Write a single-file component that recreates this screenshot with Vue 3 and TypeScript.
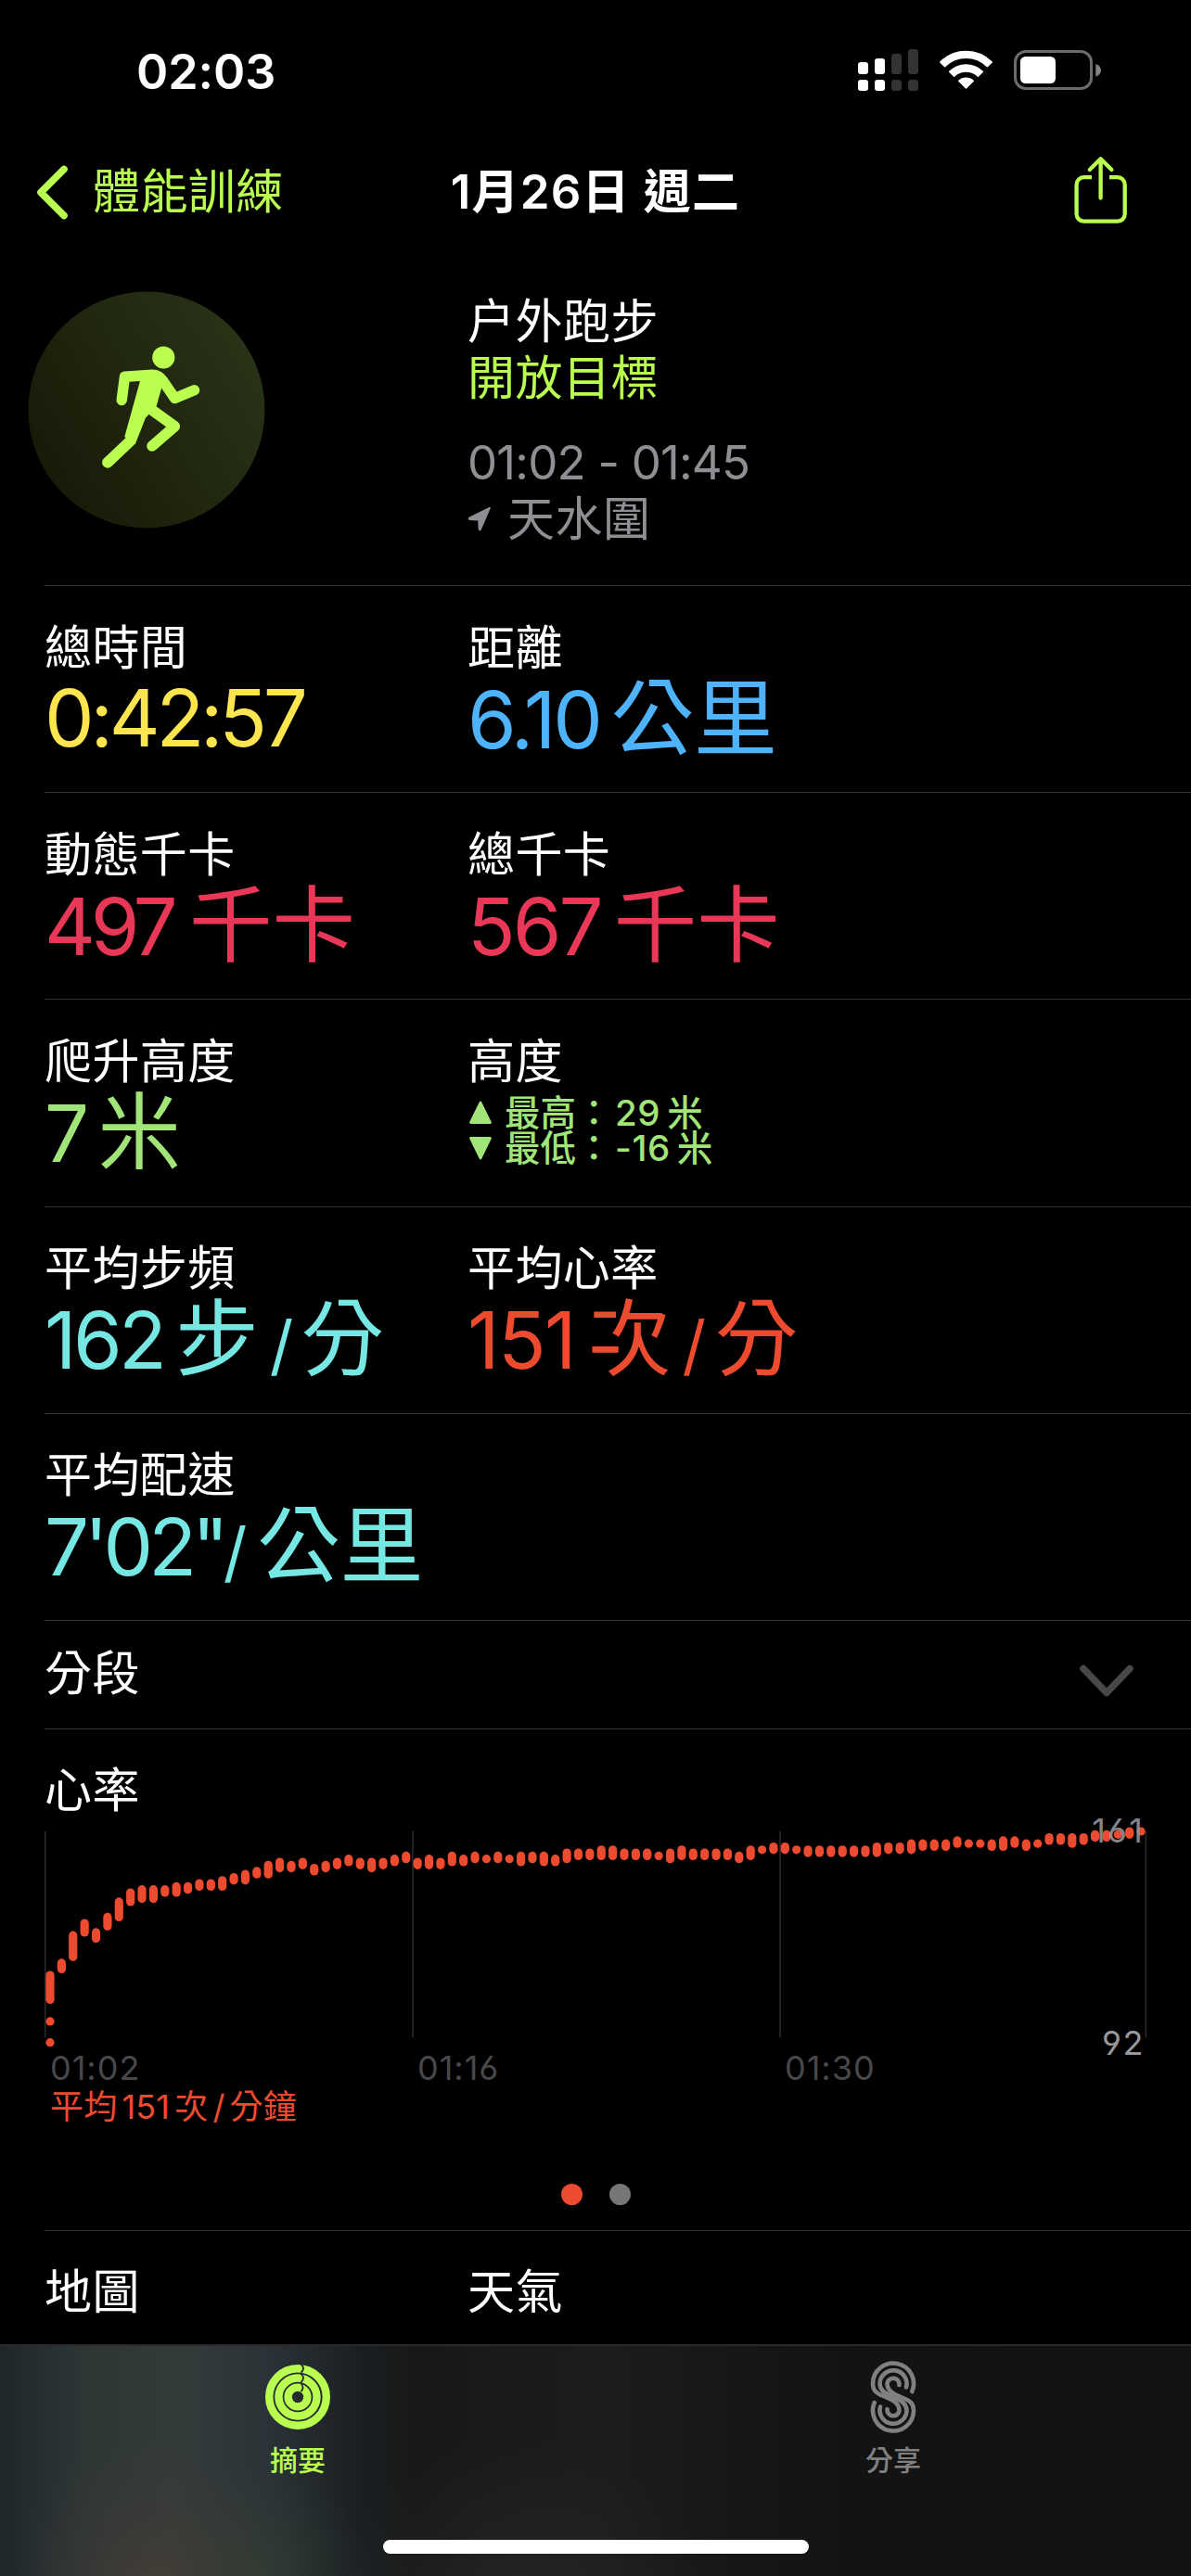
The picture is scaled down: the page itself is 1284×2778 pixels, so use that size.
<script setup lang="ts">
type PartKind = 'num' | 'unit' | 'slash'

interface Part {
  text: string
  kind: PartKind
  gap?: number
  tracking?: number
}

interface Metric {
  label: string
  tone: string
  parts: Part[]
}

const rows: Metric[][] = [
  [
    { label: '總時間', tone: 'yellow', parts: [{ text: '0:42:57', kind: 'num', tracking: -4.2 }] },
    {
      label: '距離',
      tone: 'blue',
      parts: [
        { text: '6.10', kind: 'num', tracking: -3.1 },
        { text: '公里', kind: 'unit', gap: 12 },
      ],
    },
  ],
  [
    {
      label: '動態千卡',
      tone: 'pink',
      parts: [
        { text: '497', kind: 'num', tracking: -5.2 },
        { text: '千卡', kind: 'unit', gap: 17.5 },
      ],
    },
    {
      label: '總千卡',
      tone: 'pink',
      parts: [
        { text: '567', kind: 'num', tracking: -2.9 },
        { text: '千卡', kind: 'unit', gap: 14 },
      ],
    },
  ],
  [
    {
      label: '爬升高度',
      tone: 'green',
      parts: [
        { text: '7', kind: 'num', tracking: -2 },
        { text: '米', kind: 'unit', gap: 11.5 },
      ],
    },
    { label: '高度', tone: 'green', parts: [] },
  ],
  [
    {
      label: '平均步頻',
      tone: 'cyan',
      parts: [
        { text: '162', kind: 'num', tracking: -3.6 },
        { text: '步', kind: 'unit', gap: 13 },
        { text: '/', kind: 'slash', gap: 12 },
        { text: '分', kind: 'unit', gap: 8 },
      ],
    },
    {
      label: '平均心率',
      tone: 'red',
      parts: [
        { text: '151', kind: 'num', tracking: -1.6 },
        { text: '次', kind: 'unit', gap: 14 },
        { text: '/', kind: 'slash', gap: 12 },
        { text: '分', kind: 'unit', gap: 9.5 },
      ],
    },
  ],
  [
    {
      label: '平均配速',
      tone: 'cyan',
      parts: [
        { text: '7\'02"', kind: 'num', tracking: -5 },
        { text: '/', kind: 'slash', gap: -1 },
        { text: '公里', kind: 'unit', gap: 11 },
      ],
    },
  ],
]

const partStyle = (part: Part) => ({
  marginLeft: `${part.gap ?? 0}px`,
  letterSpacing: `${part.tracking ?? 0}px`,
})

// Heart rate samples: [high, low] in beats per minute.
const samples: [number, number][] = [
  [114, 106], [118, 116], [127, 120], [131, 128], [128, 126], [133, 130], [138, 133], [141, 138],
  [142, 139], [142, 139], [142, 141], [143, 141], [143, 142], [144, 143], [144, 143], [145, 143],
  [146, 145], [147, 145], [148, 147], [150, 147], [151, 149], [150, 149], [151, 150], [149, 148],
  [150, 149], [151, 150], [152, 151], [151, 150], [151, 149], [151, 150], [152, 151], [153, 152],
  [151, 150], [152, 150], [151, 150], [153, 151], [152, 151], [153, 152], [152, 152], [153, 152],
  [152, 152], [153, 151], [153, 152], [153, 151], [152, 151], [154, 152], [154, 153], [154, 153],
  [155, 153], [155, 153], [154, 153], [154, 153], [154, 153], [153, 153], [154, 152], [155, 153],
  [154, 153], [154, 153], [154, 153], [154, 153], [153, 152], [155, 153], [155, 155], [156, 155],
  [156, 155], [155, 155], [155, 154], [155, 154], [155, 154], [155, 154], [155, 154], [155, 154],
  [156, 154], [156, 155], [156, 155], [157, 155], [157, 156], [157, 156], [157, 156], [158, 157],
  [157, 157], [157, 157], [157, 156], [158, 156], [158, 157], [157, 156], [157, 157], [159, 158],
  [159, 158], [159, 157], [159, 158], [160, 159], [160, 159], [160, 160], [161, 160], [161, 161],
]

const MAX_BPM = 161
const STEP = 12.38
const SCALE = 3.3
const R = 4.6

const bar = (index: number, high: number, low: number) => ({
  x: 6 + index * STEP - R,
  y: 10 + (MAX_BPM - high) * SCALE - R,
  h: (high - low) * SCALE + R * 2,
})

const bars = [
  ...samples.map(([high, low], i) => bar(i, high, low)),
  bar(0, 98.9, 98.9),
  bar(0, 92, 92),
]

const gridLines = [0.7, 397, 793, 1187.3]
const times = ['01:02', '01:16', '01:30']
</script>

<template>
  <div class="screen">
    <div class="status">
      <span class="clock">02:03</span>
      <svg class="status-icons" width="270" height="50" viewBox="0 0 270 50">
        <g fill="#fff">
          <rect x="5" y="17" width="11" height="13" rx="3" />
          <rect x="23" y="13" width="11" height="17" rx="3" />
          <rect x="5" y="36" width="11" height="12" rx="3" />
          <rect x="23" y="36" width="11" height="12" rx="3" />
        </g>
        <g fill="#333">
          <rect x="41" y="8" width="11" height="22" rx="3" />
          <rect x="59" y="3" width="11" height="27" rx="3" />
          <rect x="41" y="36" width="11" height="12" rx="3" />
          <rect x="59" y="36" width="11" height="12" rx="3" />
        </g>
        <g fill="#fff" stroke="#fff" stroke-width="1.4" stroke-linejoin="round">
          <path d="M93.7 17A39 39 0 0 1 149.3 17L144.4 21.800A32.400 32.400 0 0 0 98.600 21.800Z" />
          <path d="M103.600 27.200A25.500 25.500 0 0 1 139.400 27.200L134.400 32.200A18.600 18.600 0 0 0 108.600 32.200Z" />
          <path d="M113.700 37.300A11.600 11.600 0 0 1 129.300 37.300L121.500 45Z" />
        </g>
        <rect x="174.500" y="5.500" width="82" height="40" rx="11.500" fill="none" stroke="#6b6b6b" stroke-width="3" />
        <rect x="180" y="11" width="38" height="29" rx="5.500" fill="#fff" />
        <path d="M261.300 19C265 20.200 267 22.800 267 25.800S265 31.400 261.300 32.600Z" fill="#848484" />
      </svg>
    </div>

    <nav class="nav">
      <a class="back">
        <svg width="40" height="64" viewBox="0 0 40 64">
          <path d="M33 7.500L8 32.500L33 57.500" fill="none" stroke="#baff4f" stroke-width="7.600" stroke-linecap="round" stroke-linejoin="round" />
        </svg>
        <span>體能訓練</span>
      </a>
      <h1 class="title">1月26日 週二</h1>
      <svg class="share" width="60" height="76" viewBox="0 0 60 76" fill="none" stroke="#baff4f" stroke-width="4.300">
        <path d="M20 23.200H11.500A8 8 0 0 0 3.600 31.200V62.800A8 8 0 0 0 11.500 70.700H47.800A8 8 0 0 0 55.700 62.800V31.200A8 8 0 0 0 47.800 23.200H39" />
        <path d="M29.600 4V45.500M17.800 15L29.600 3.300L41.400 15" stroke-linecap="round" stroke-linejoin="round" />
      </svg>
    </nav>

    <section class="hero">
      <svg class="badge" width="256" height="256" viewBox="0 0 256 256">
        <defs>
          <linearGradient id="badgeFill" x1="0.1" y1="0.75" x2="0.9" y2="0.25">
            <stop offset="0" stop-color="#191b08" />
            <stop offset="1" stop-color="#283217" />
          </linearGradient>
        </defs>
        <circle cx="128" cy="128" r="127.500" fill="url(#badgeFill)" />
        <g fill="none" stroke="#baff4f" stroke-linecap="round" stroke-linejoin="round">
          <path d="M101.200 117.500L104.500 92.300L134 90.200Q141 90 145.500 96.500L158.500 115.500L179.500 106.800" stroke-width="11.400" />
          <path d="M135 129L158.300 145.800L134 167" stroke-width="11.600" />
          <path d="M86 184.800L109.500 162.500" stroke-width="11.800" />
        </g>
        <path d="M121.500 95H143L144.300 104L138.300 125L127 136.500L115.600 165.500L104.300 157Z" fill="#baff4f" />
        <circle cx="146.300" cy="71.500" r="12.100" fill="#baff4f" />
      </svg>
      <div class="hero-info">
        <div class="line">户外跑步</div>
        <div class="line lime">開放目標</div>
        <div class="line gray period">01:02 - 01:45</div>
        <div class="line gray place">
          <svg width="26" height="28" viewBox="0 0 26 28">
            <path d="M23.800 1.800L14 24.500Q13 26.500 12.600 24.200L12.300 14.600L2.800 14.100Q.8 13.600 2.500 12.400Z" fill="#8e8e93" stroke="#8e8e93" stroke-width="2" stroke-linejoin="round" />
          </svg>
          <span>天水圍</span>
        </div>
      </div>
    </section>

    <section v-for="(row, r) in rows" :key="r" class="row">
      <div v-for="metric in row" :key="metric.label" class="cell">
        <div class="label">{{ metric.label }}</div>
        <div v-if="metric.parts.length" class="value" :class="metric.tone">
          <span v-for="(part, p) in metric.parts" :key="p" :class="part.kind" :style="partStyle(part)">{{ part.text }}</span>
        </div>
        <div v-else class="altitude green">
          <div class="alt-line">
            <svg width="26" height="26" viewBox="0 0 26 26"><path d="M13 2L23.500 23.500H2.500Z" fill="currentColor" stroke="currentColor" stroke-width="2.800" stroke-linejoin="round" /></svg>
            <span>最高：</span><span class="alt-num">29</span><span class="alt-unit">米</span>
          </div>
          <div class="alt-line">
            <svg width="26" height="26" viewBox="0 0 26 26"><path d="M13 24L23.500 2.500H2.500Z" fill="currentColor" stroke="currentColor" stroke-width="2.800" stroke-linejoin="round" /></svg>
            <span>最低：</span><span class="alt-num">-16</span><span class="alt-unit">米</span>
          </div>
        </div>
      </div>
    </section>

    <section class="row splits">
      <div class="label">分段</div>
      <svg width="60" height="38" viewBox="0 0 60 38">
        <path d="M5 5.500L30 31.500L55 5.500" fill="none" stroke="#48484a" stroke-width="7.500" stroke-linecap="round" stroke-linejoin="round" />
      </svg>
    </section>

    <section class="row heart">
      <div class="label">心率</div>
      <div class="chart">
        <svg width="1200" height="244" viewBox="0 0 1200 244">
          <rect v-for="x in gridLines" :key="x" :x="x - 0.8" y="10" width="1.600" height="222" fill="#2b2b2b" />
          <rect v-for="(b, i) in bars" :key="i" :x="b.x" :y="b.y" :width="R * 2" :height="b.h" :rx="R" fill="#ed4b2f" />
        </svg>
        <span class="bound high">161</span>
        <span class="bound low">92</span>
      </div>
      <div class="times">
        <span v-for="t in times" :key="t">{{ t }}</span>
      </div>
      <div class="average">平均<span>151</span>次<i>/</i>分鐘</div>
      <div class="pager"><b class="on" /><b /></div>
    </section>

    <section class="row last">
      <div class="cell"><div class="label">地圖</div></div>
      <div class="cell"><div class="label">天氣</div></div>
    </section>

    <footer class="tabs">
      <div class="tab active">
        <svg width="80" height="80" viewBox="-40 -40 80 80" fill="none">
          <g stroke="#baff4f" stroke-width="8.400">
            <circle r="30.800" />
            <circle r="20.500" />
            <circle r="10.400" />
          </g>
          <g stroke="#252c2e" stroke-width="1.900">
            <path d="M3.500 -35.400Q8.500 -30.800 3.500 -26.400" />
            <path d="M3.500 -25.100Q8.500 -20.500 3.500 -16" />
            <path d="M3.500 -15Q7.500 -10 3.500 -5.800" />
          </g>
        </svg>
        <span>摘要</span>
      </div>
      <div class="tab">
        <svg width="80" height="80" viewBox="-40 -40 80 80" fill="none" stroke="#808080" stroke-width="4.600" stroke-linecap="round">
          <path d="M20.300 -6A22 22 0 1 0 -22 -14.500C-22 -6.500 -18 -4 -10 -.8S6.500 6 6.500 14.500A6.500 6.500 0 1 1 -6.500 13" />
          <path d="M14 -10.500A14.500 14.500 0 1 0 -14.500 -14.500C-14.500 -8 -10 -4.500 0 0S14.500 8 14.500 14.500A14.500 14.500 0 1 1 -14 10.500" />
          <path d="M-20.300 6A22 22 0 1 0 22 14.500C22 6.500 18 4 10 .8S-6.500 -6 -6.500 -14.500A6.500 6.500 0 1 1 6.500 -13" />
        </svg>
        <span>分享</span>
      </div>
      <div class="home" />
    </footer>
  </div>
</template>

<style>
body {
  background: #000;
}
</style>

<style scoped>
.screen {
  width: 1284px;
  height: 2778px;
  overflow: hidden;
  background: #000;
  color: #fff;
  font-family: Inter, 'Noto Sans CJK TC', sans-serif;
  font-size: 51px;
  display: flex;
  flex-direction: column;
  box-sizing: border-box;
}
.status {
  height: 140px;
  flex: none;
  display: flex;
  justify-content: space-between;
  box-sizing: border-box;
  padding: 50px 94px 0 147px;
}
.status-icons {
  flex: none;
  margin-top: -0.500px;
}
.clock {
  font-weight: 600;
  font-size: 52px;
  line-height: 56px;
  letter-spacing: -0.100px;
}
.nav {
  height: 140px;
  flex: none;
  display: grid;
  grid-template-columns: 1fr auto 1fr;
  align-items: start;
  line-height: 60px;
}
.back {
  display: flex;
  align-items: center;
  height: 64px;
  margin-top: 35px;
  padding-left: 36px;
  color: #baff4f;
}
.back span {
  margin-left: 24px;
  letter-spacing: 0.400px;
}
.title {
  margin: 37px 0 0;
  font-size: 51px;
  font-weight: 600;
  letter-spacing: 1.200px;
}
.share {
  justify-self: end;
  margin: 28px 67px 0 0;
}
.hero {
  height: 351px;
  flex: none;
  display: flex;
}
.badge {
  margin: 34px 218px 0 30px;
}
.hero-info {
  padding-top: 36px;
}
.line {
  height: 61px;
  line-height: 61px;
  white-space: nowrap;
  letter-spacing: 0.500px;
}
.lime {
  color: #baff4f;
}
.gray {
  color: #8e8e93;
}
.period {
  margin-top: 30px;
  letter-spacing: -0.800px;
}
.place {
  display: flex;
  align-items: center;
}
.place span {
  margin-left: 17px;
}
.row {
  height: 223.200px;
  flex: none;
  display: flex;
  box-sizing: border-box;
  margin-left: 48px;
  border-top: 1.500px solid #333;
}
.cell {
  width: 456px;
  padding-top: 35.500px;
}
.label {
  height: 61px;
  line-height: 61px;
  white-space: nowrap;
  letter-spacing: 0.400px;
}
.value {
  height: 90px;
  margin-top: 1px;
  display: flex;
  align-items: baseline;
  line-height: 90px;
  white-space: nowrap;
}
.num {
  font-size: 85px;
}
.unit {
  font-size: 89.500px;
  line-height: 90px;
}
.slash {
  font-size: 71px;
}
.yellow { color: #fce54e; }
.blue { color: #4fb3fb; }
.pink { color: #e93757; }
.green { color: #a1e478; }
.cyan { color: #77e7e4; }
.red { color: #ed4b2f; }
.altitude {
  font-size: 38.500px;
  font-weight: 500;
  padding-top: 6px;
}
.alt-line {
  height: 38px;
  line-height: 38px;
  display: flex;
  align-items: center;
  white-space: nowrap;
}
.alt-line svg {
  margin: 0 13px 0 1px;
}
.alt-num {
  margin-left: 3.500px;
  letter-spacing: 0.600px;
}
.alt-unit {
  margin-left: 7px;
}
.splits {
  height: 117px;
  justify-content: space-between;
  padding: 26px 61px 0 0;
}
.splits svg {
  margin-top: 20px;
}
.heart {
  height: 541px;
  flex-direction: column;
  padding-top: 35px;
}
.chart {
  position: relative;
  height: 244px;
  margin-top: 4px;
}
.chart svg {
  display: block;
}
.bound {
  position: absolute;
  right: 50px;
  font-size: 36px;
  line-height: 40px;
  letter-spacing: 1.500px;
  color: #98989c;
  font-feature-settings: 'cv03', 'cv04';
}
.high {
  top: -11px;
  letter-spacing: 2.200px;
  opacity: 0.88;
}
.low {
  top: 218px;
}
.times {
  display: flex;
  height: 42px;
  line-height: 42px;
  font-size: 36px;
  letter-spacing: 1px;
  color: #48484a;
  margin-left: 6px;
  font-feature-settings: 'cv03', 'cv04';
}
.times span {
  width: 396px;
}
.average {
  margin-left: 6px;
  height: 42px;
  line-height: 42px;
  font-size: 36px;
  letter-spacing: 0.200px;
  color: #ed4b2f;
}
.average span {
  margin: 0 5px;
}
.average i {
  font-style: normal;
  margin: 0 5px;
}
.pager {
  display: flex;
  gap: 29px;
  justify-content: center;
  margin: 62px 48px 0 0;
}
.pager b {
  width: 23px;
  height: 23px;
  border-radius: 50%;
  background: #767676;
}
.pager .on {
  background: #ed4b2f;
}
.last {
  height: 123px;
}
.tabs {
  height: 250px;
  flex: none;
  box-sizing: border-box;
  border-top: 2px solid #2a2a2a;
  display: flex;
  flex-wrap: wrap;
  align-content: flex-start;
  justify-content: center;
  background:
    radial-gradient(ellipse 150px 170px at 165px 265px, rgba(74, 62, 54, 0.750), rgba(66, 58, 54, 0.400) 50%, transparent),
    radial-gradient(ellipse 130px 120px at 275px 250px, rgba(50, 64, 48, 0.600), transparent),
    radial-gradient(ellipse 200px 160px at 560px 260px, rgba(40, 40, 40, 0.700), transparent),
    linear-gradient(90deg, #20272b 0, #2d3635 90px, #333b3a 190px, #2b3338 290px, #1b1f22 385px, #171818 450px, #1c1c1c 650px, #131313 900px, #121212 100%);
}
.tab {
  width: 642px;
  height: 160px;
  display: flex;
  flex-direction: column;
  align-items: center;
  color: #808080;
  font-size: 30px;
  font-weight: 500;
}
.tab svg {
  margin-top: 15px;
}
.tab span {
  margin-top: 8px;
  line-height: 40px;
}
.active {
  color: #baff4f;
}
.home {
  width: 459px;
  height: 15px;
  border-radius: 8px;
  background: #fff;
  margin-top: 49px;
}
</style>
